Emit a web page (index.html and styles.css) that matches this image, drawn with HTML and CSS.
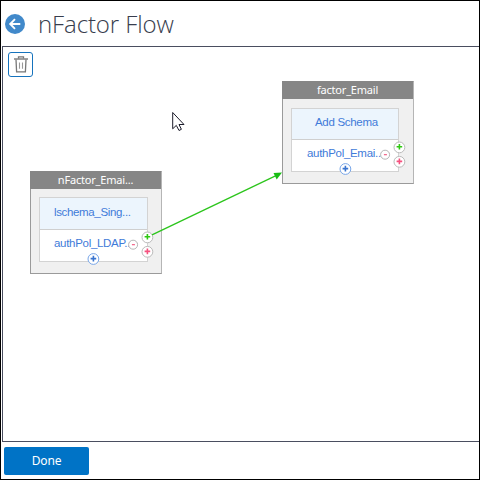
FILE: index.html
```html
<!DOCTYPE html>
<html lang="en">
<head>
<meta charset="utf-8">
<title>nFactor Flow</title>
<link rel="stylesheet" href="styles.css">
</head>
<body>
<div class="app">
  <header class="header">
    <svg class="back" width="20" height="20" viewBox="0 0 20 20"><circle cx="10" cy="10" r="10" fill="#4189ca"/><path d="M15.3 10H5.5M10 5.2L5.2 10l4.8 4.8" fill="none" stroke="#fff" stroke-width="1.9"/></svg>
    <h1 class="title">nFactor Flow</h1>
  </header>
  <main class="canvas">
    <button class="trash" aria-label="Delete">
      <svg width="14" height="17" viewBox="0 0 14 17" fill="none" stroke="#777"><path d="M0 3h14" stroke-width="1.4"/><path d="M4.5 2.6V.9h5v1.7" stroke-width="1.3"/><path d="M2 3.5l.6 12.3h8.8L12 3.5" stroke-width="1.3"/><path d="M5.5 6.5v6.3M8.5 6.5v6.3" stroke="#999" stroke-width="1.1"/></svg>
    </button>

    <section class="node node-first">
      <h2 class="node-title">nFactor_Emai...</h2>
      <div class="box">
        <div class="schema"><span class="t-schema-a">lschema_Sing...</span></div>
        <div class="policy"><span class="t-policy-a">authPol_LDAP...</span></div>
        <svg class="badges" width="111" height="66" viewBox="0 0 111 66"><use href="#badge-set"/></svg>
      </div>
    </section>

    <section class="node node-second">
      <h2 class="node-title">factor_Email</h2>
      <div class="box">
        <div class="schema"><span class="t-schema-b">Add Schema</span></div>
        <div class="policy"><span class="t-policy-b">authPol_Emai...</span></div>
        <svg class="badges" width="111" height="66" viewBox="0 0 111 66"><use href="#badge-set"/></svg>
      </div>
    </section>

    <svg class="links" width="476" height="394" viewBox="3 47 476 394">
      <defs>
        <g id="badge-set" fill="#fff">
          <circle cx="94.1" cy="47.7" r="4.5" stroke="#b5b5b5"/><path d="M92.9 47.7h3" stroke="#f0527b" stroke-width="1.1"/>
          <circle cx="108.4" cy="40.4" r="5.4" stroke="#bababa"/><path d="M105.6 39.8h5.6M108.4 37v5.6" stroke="#2fc812" stroke-width="1.6"/>
          <circle cx="108.4" cy="54.8" r="5.4" stroke="#bababa"/><path d="M105.6 54.4h5.6M108.4 51.6v5.6" stroke="#f5527f" stroke-width="1.6"/>
          <circle cx="54.4" cy="62" r="5.4" stroke="#78a6e8"/><path d="M51.6 61.6h5.6M54.4 58.8v5.6" stroke="#3974cf" stroke-width="1.6"/>
        </g>
      </defs>
      <path d="M152 234.8L276 175.7" stroke="#2cc51c" stroke-width="1.3"/>
      <path d="M282 172.5l-8.5.4 3.2 6.6z" fill="#18bd14"/>
      <path d="M172.7 112.5v16.3l3.6-3.4 2.7 5.1 2.4-1.2-2.4-4.8h5z" fill="#fff" stroke="#1c1c2a"/>
    </svg>
  </main>
  <footer class="footer"><button class="done">Done</button></footer>
</div>
</body>
</html>
```
FILE: styles.css
```css
* { box-sizing: border-box; }
body { margin: 0; background: #fff; }
.app {
  width: 480px;
  height: 480px;
  border: 1px solid #000;
  display: flex;
  flex-direction: column;
  overflow: hidden;
}
.header {
  height: 45px;
  flex: none;
  display: flex;
  align-items: center;
  padding-left: 4px;
}
.back { margin-top: 1px; }
.title {
  margin: 0 0 0 13px;
  font: 300 24px/34px "Open Sans", "Noto Sans", sans-serif;
  letter-spacing: -.1px;
  color: #383d4d;
  white-space: nowrap;
}
.canvas {
  position: relative;
  height: 396px;
  flex: none;
  margin-left: 1px;
  border: 1px solid #4a4e60;
  border-right: 0;
  padding: 5px;
}
.trash {
  display: flex;
  align-items: center;
  justify-content: center;
  width: 25px;
  height: 25px;
  padding: 0;
  background: #fff;
  border: 1px solid #1673bd;
  border-radius: 3px;
}
.node {
  position: absolute;
  width: 132px;
  height: 103px;
  background: #f0f0f0;
  border: 1px solid #9a9a9a;
  border-right-color: #b5b5b5;
}
.node-first { left: 27px; top: 124px; }
.node-second { left: 279px; top: 34px; }
.node-title {
  margin: -1px 0 0 -1px;
  height: 18px;
  background: #868686;
  color: #fff;
  font: 400 11px/18px "Noto Sans", sans-serif;
  letter-spacing: -.2px;
  text-align: center;
}
.box {
  position: relative;
  width: 109px;
  height: 65px;
  margin: 8px 0 0 8px;
  border: 1px solid #d3d3d3;
  background: #fff;
  color: #3f7bd9;
  font: 400 11.5px/13px "Liberation Sans", Arial, sans-serif;
  letter-spacing: -.3px;
  white-space: nowrap;
}
.node-second .box {
  width: 108px;
  height: 64px;
  margin-top: 9px;
}
.schema {
  height: 32px;
  background: #ecf5fd;
  border-bottom: 1px solid #cfcfcf;
  padding-top: 8px;
  padding-left: 14px;
}
.node-second .schema { height: 31px; padding-top: 7px; }
.policy { padding: 7px 0 0 14px; }
.t-schema-a { letter-spacing: -.35px; }
.t-schema-b { margin-left: 9px; }
.t-policy-b { margin-left: 1px; }
.badges {
  position: absolute;
  left: -1px;
  top: -1px;
  overflow: visible;
}
.node-second .badges { top: -2px; }
.links { position: absolute; left: 0; top: 0; pointer-events: none; }
.footer { padding: 5px 0 0 3px; }
.done {
  display: block;
  width: 85px;
  height: 28px;
  padding: 0;
  border: 0;
  border-radius: 2px;
  background: #0073c6;
  color: #fff;
  font: 400 12px/28px "Noto Sans", sans-serif;
  letter-spacing: -.2px;
}
```
